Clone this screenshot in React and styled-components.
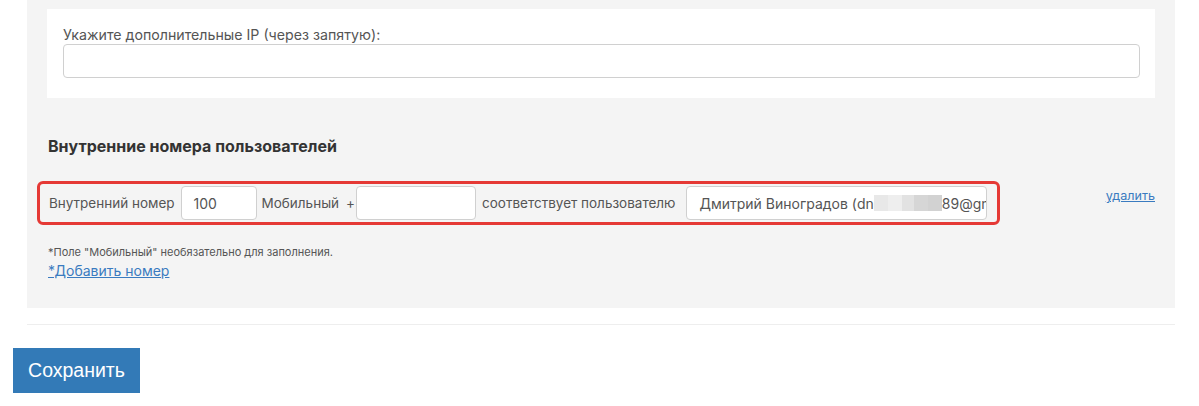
import React from "react";
import styled, {createGlobalStyle} from "styled-components";

const GlobalStyle = createGlobalStyle`
  body {
    margin: 0;
    background: #fff;
    font-family: Inter, "Noto Sans", sans-serif;
  }
`;

const Page = styled.div`
  width: 1199px;
  padding: 0 0 0 13px;
  box-sizing: border-box;
`;

const Panel = styled.div`
  margin-left: 14px;
  width: 1148px;
  box-sizing: border-box;
  background: #f4f4f4;
  padding: 9px 20px 0 20px;
  height: 308px;
`;

const WhiteBox = styled.div`
  background: #fff;
  padding: 17px 15px 20px 16px;
  height: 89px;
  box-sizing: border-box;
`;

const Label = styled.div`
  font-size: 14.2px;
  color: #555;
  line-height: 18px;
`;

const TextInput = styled.div`
  box-sizing: border-box;
  flex-shrink: 0;
  height: 34px;
  border: 1px solid #d0d0d0;
  border-radius: 4px;
  background: #fff;
  width: ${p => p.$w || "100%"};
  padding: 0 12px;
  display: flex;
  align-items: center;
  font-size: 14px;
  color: #555;
  white-space: nowrap;
  overflow: hidden;
`;

const Heading = styled.h3`
  margin: 38px 0 0 1px;
  font-size: 16px;
  font-weight: 700;
  color: #333;
  line-height: 20px;
`;

const RowLine = styled.div`
  display: flex;
  justify-content: space-between;
  align-items: flex-start;
  margin-top: 25px;
  margin-left: -10px;
`;

const Highlight = styled.div`
  display: flex;
  align-items: center;
  border: 3px solid #e53935;
  border-radius: 6px;
  padding: 2px 10px 2px 9px;
  font-size: 13.5px;
  color: #555;
  white-space: nowrap;
`;

const Caption = styled.span`
  margin: 0 ${p => p.$r ?? 6}px 0 ${p => p.$l ?? 6}px;
`;

const Blur = styled.span`
  display: inline-block;
  flex-shrink: 0;
  width: ${p => p.$w}px;
  height: 16px;
  background: ${p => p.$c};
`;

const DeleteLink = styled.a`
  margin-top: 7px;
  font-size: 12.6px;
  color: #3a7bc0;
  text-decoration: underline;
  cursor: pointer;
`;

const Note = styled.div`
  margin-top: 20px;
  margin-left: 1px;
  font-size: 11px;
  color: #555;
  line-height: 14px;
`;

const AddLink = styled.a`
  display: inline-block;
  margin-left: 1px;
  margin-top: 3px;
  font-size: 14px;
  color: #3a7bc0;
  text-decoration: underline;
  line-height: 18px;
`;

const Divider = styled.div`
  margin: 16px 0 0 14px;
  width: 1148px;
  height: 1px;
  background: #eeeeee;
`;

const SaveButton = styled.button`
  margin-top: 23px;
  height: 45px;
  width: 127px;
  border: none;
  border-radius: 0;
  background: #337ab7;
  color: #fff;
  font-family: "Liberation Sans", Arial, sans-serif;
  font-size: 19.5px;
  padding: 0;
  cursor: pointer;
`;

const App = () => {
  return (
    <Page>
      <GlobalStyle/>
      <Panel>
        <WhiteBox>
          <Label>Укажите дополнительные IP (через запятую):</Label>
          <TextInput/>
        </WhiteBox>
        <Heading>Внутренние номера пользователей</Heading>
        <RowLine>
          <Highlight>
            <Caption $l={0}>Внутренний номер</Caption>
            <TextInput $w="76px">100</TextInput>
            <Caption $l={5} $r={0}>Мобильный</Caption>
            <Caption $l={7} $r={1}>+</Caption>
            <TextInput $w="120px"/>
            <Caption $r={11}>соответствует пользователю</Caption>
            <TextInput $w="301px">
              Дмитрий Виноградов (dn
              <Blur $w={14} $c="#e8e8e8"/>
              <Blur $w={14} $c="#eeeeee"/>
              <Blur $w={12} $c="#e2e2e2"/>
              <Blur $w={14} $c="#d6d6d6"/>
              <Blur $w={14} $c="#d2d2d2"/>
              89@gmail.com)
            </TextInput>
          </Highlight>
          <DeleteLink>удалить</DeleteLink>
        </RowLine>
        <Note>*Поле "Мобильный" необязательно для заполнения.</Note>
        <AddLink>*Добавить номер</AddLink>
      </Panel>
      <Divider/>
      <SaveButton>Сохранить</SaveButton>
    </Page>
  );
};

export default App;
